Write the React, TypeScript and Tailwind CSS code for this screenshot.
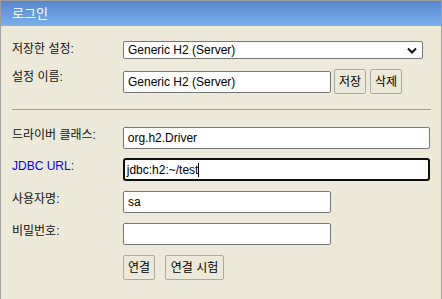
import React from 'react';

const font = "font-['Liberation_Sans','Noto_Sans_CJK_KR',sans-serif]";

function TextBox({ value, wide, focused }: { value: string; wide?: boolean; focused?: boolean }) {
  const width = wide ? 'w-[308px]' : 'w-[208px]';
  if (focused) {
    return (
      <div className={`${width} h-[23px] bg-white border-2 border-[#101010] rounded-[3px] flex items-center pl-[2px] text-[12px] text-black`}>
        <span>{value}</span>
        <span className="w-px h-[14px] bg-black" />
      </div>
    );
  }
  return (
    <div className={`${width} h-[22px] bg-white border border-[#767676] rounded-[2px] flex items-center pl-[4px] text-[12px] text-black`}>
      {value}
    </div>
  );
}

function Btn({ label, width }: { label: string; width: string }) {
  return (
    <button
      type="button"
      className={`${width} h-[25px] bg-[#ece9d8] border border-[#aaa9a2] rounded-[2px] text-[12px] text-black flex items-center justify-center`}
    >
      {label}
    </button>
  );
}

function Row({ label, blue, className, children }: { label: string; blue?: boolean; className: string; children: React.ReactNode }) {
  return (
    <div className={`flex items-start ${className}`}>
      <div className={`w-[111px] text-[12px] leading-[16px] ${blue ? 'text-[#0000ff]' : 'text-[#111]'}`}>{label}</div>
      {children}
    </div>
  );
}

export default function App() {
  return (
    <div className={`w-[442px] h-[299px] overflow-hidden bg-[#ece9d8] border-t border-l border-r border-[#a0a0a0] ${font}`}>
      <div className="h-[25px] bg-gradient-to-b from-[#5886cc] to-[#7ab0ee] flex items-center pl-[11px] text-white text-[13px]">
        로그인
      </div>

      <div className="px-[11px]">
        <Row label="저장한 설정:" className="mt-[15px]">
          <div className="w-[300px] h-[18px] bg-white border border-[#767676] rounded-[2px] flex items-center justify-between pl-[4px] pr-[4px] text-[12px] text-black">
            <span>Generic H2 (Server)</span>
            <svg width="10" height="7" viewBox="0 0 10 7" className="mr-[1px]">
              <path d="M1 1.5 L5 5.5 L9 1.5" fill="none" stroke="#111" strokeWidth="2" />
            </svg>
          </div>
        </Row>

        <Row label="설정 이름:" className="mt-[10px]">
          <div className="flex items-center h-[25px]">
            <TextBox value="Generic H2 (Server)" />
            <div className="ml-[3px]">
              <Btn label="저장" width="w-[32px]" />
            </div>
            <div className="ml-[4px]">
              <Btn label="삭제" width="w-[32px]" />
            </div>
          </div>
        </Row>

        <div className="mt-[15px] h-px w-[419px] bg-[#a0a0a0]" />

        <Row label="드라이버 클래스:" className="mt-[17px]">
          <TextBox value="org.h2.Driver" wide />
        </Row>

        <Row label="JDBC URL:" blue className="mt-[9px]">
          <TextBox value="jdbc:h2:~/test" wide focused />
        </Row>

        <Row label="사용자명:" className="mt-[10px]">
          <TextBox value="sa" />
        </Row>

        <Row label="비밀번호:" className="mt-[10px]">
          <TextBox value="" />
        </Row>

        <div className="flex mt-[10px] pl-[111px] gap-[10px]">
          <Btn label="연결" width="w-[32px]" />
          <Btn label="연결 시험" width="w-[59px]" />
        </div>
      </div>
    </div>
  );
}
